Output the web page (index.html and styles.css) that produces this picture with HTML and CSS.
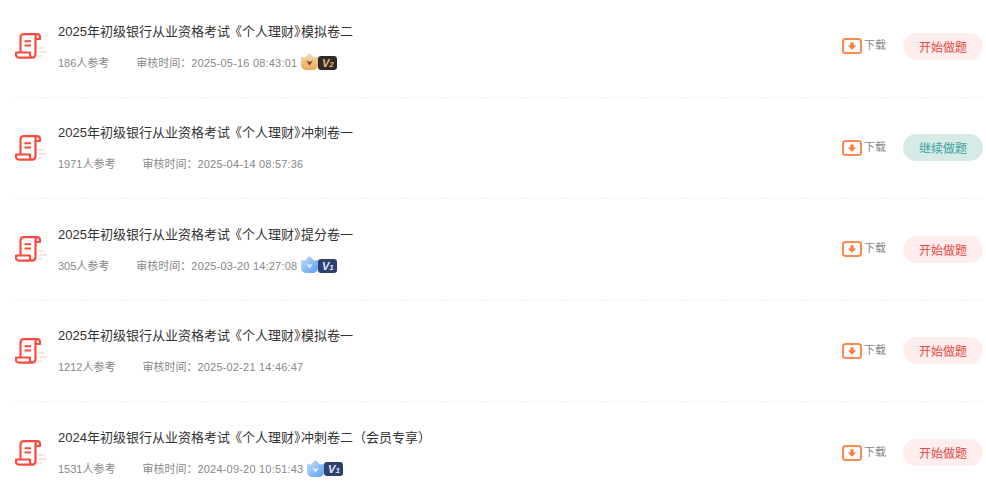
FILE: index.html
```html
<!DOCTYPE html>
<html lang="zh-CN">

<head>
    <meta charset="UTF-8">
    <title>试卷列表</title>
    <link rel="stylesheet" href="styles.css">
</head>

<body>
    <svg class="defs" width="0" height="0">
        <defs>
            <linearGradient id="goldFill" x1="0" y1="0" x2="0" y2="1">
                <stop offset="0" stop-color="#f8dcb4" />
                <stop offset="1" stop-color="#eda65a" />
            </linearGradient>
            <linearGradient id="blueFill" x1="0" y1="0" x2="1" y2="1">
                <stop offset="0" stop-color="#c4e0fb" />
                <stop offset="1" stop-color="#5a9df0" />
            </linearGradient>
            <symbol id="scroll" viewBox="0 0 33 26">
                <path d="M23 15H29M24 19H32M23 23H27" stroke="#fde3df" stroke-width="2" />
                <path d="M5.5 19V4.5C5.5 2.5 6.8 1.2 8.7 1.2H22C23.8 1.2 25 2.4 25 4V6H20.5V21C20.5 23.2 19 24.6 17 24.6H4C2.2 24.6 1 23.4 1 21.8V19.5H15V21.8C15 23.4 15.8 24.6 17 24.6" fill="none" stroke="#fb4b3e" stroke-width="2.2" stroke-linejoin="round" />
                <path d="M20.5 6V4.2C20.5 2.6 21 1.2 22 1.2" fill="none" stroke="#fb4b3e" stroke-width="2.2" />
                <path d="M9.5 8.2H16M9.5 12.4H16" stroke="#fb4b3e" stroke-width="2" />
            </symbol>
            <symbol id="down" viewBox="0 0 20 16">
                <rect x="1" y="1" width="18" height="14" rx="2.5" fill="#fff" stroke="#fb8a4c" stroke-width="2" />
                <path d="M8.3 4.5H11.7V7.5H14.2L10 11.8L5.8 7.5H8.3Z" fill="#fb7a3c" />
            </symbol>
            <symbol id="shieldGold" viewBox="0 0 17 17">
                <path d="M0 4L4 4.5L8.5 0L13 4.5L17 4V11.5C17 14.6 15 17 12 17H5C2 17 0 14.6 0 11.5Z" fill="url(#goldFill)" />
                <path d="M5 7.5L8.5 9L12 7.5L8.5 12.5Z" fill="#6d4a24" />
            </symbol>
            <symbol id="shieldBlue" viewBox="0 0 17 17">
                <path d="M0 4L4 4.5L8.5 0L13 4.5L17 4V11.5C17 14.6 15 17 12 17H5C2 17 0 14.6 0 11.5Z" fill="url(#blueFill)" />
                <path d="M5 7.5L8.5 9L12 7.5L8.5 12.5Z" fill="#eaf4ff" />
            </symbol>
        </defs>
    </svg>

    <div class="list">

        <div class="row">
            <svg class="paper-icon"><use href="#scroll" /></svg>
            <div class="info">
                <p class="title">2025年初级银行从业资格考试<span class="book-l">《</span>个人理财<span class="book-r">》</span>模拟卷二</p>
                <p class="meta">
                    <span class="count">186人参考</span>
                    <span>审核时间：<span class="time">2025-05-16 08:43:01</span></span>
                    <span class="vip">
                        <svg class="shield"><use href="#shieldGold" /></svg>
                        <span class="vip-tag gold">V<small>2</small></span>
                    </span>
                </p>
            </div>
            <a class="download" href="#"><svg class="down-icon"><use href="#down" /></svg><span>下载</span></a>
            <a class="btn start" href="#">开始做题</a>
        </div>

        <div class="row">
            <svg class="paper-icon"><use href="#scroll" /></svg>
            <div class="info">
                <p class="title">2025年初级银行从业资格考试<span class="book-l">《</span>个人理财<span class="book-r">》</span>冲刺卷一</p>
                <p class="meta">
                    <span class="count">1971人参考</span>
                    <span>审核时间：<span class="time">2025-04-14 08:57:36</span></span>
                </p>
            </div>
            <a class="download" href="#"><svg class="down-icon"><use href="#down" /></svg><span>下载</span></a>
            <a class="btn resume" href="#">继续做题</a>
        </div>

        <div class="row">
            <svg class="paper-icon"><use href="#scroll" /></svg>
            <div class="info">
                <p class="title">2025年初级银行从业资格考试<span class="book-l">《</span>个人理财<span class="book-r">》</span>提分卷一</p>
                <p class="meta">
                    <span class="count">305人参考</span>
                    <span>审核时间：<span class="time">2025-03-20 14:27:08</span></span>
                    <span class="vip">
                        <svg class="shield"><use href="#shieldBlue" /></svg>
                        <span class="vip-tag navy">V<small>1</small></span>
                    </span>
                </p>
            </div>
            <a class="download" href="#"><svg class="down-icon"><use href="#down" /></svg><span>下载</span></a>
            <a class="btn start" href="#">开始做题</a>
        </div>

        <div class="row">
            <svg class="paper-icon"><use href="#scroll" /></svg>
            <div class="info">
                <p class="title">2025年初级银行从业资格考试<span class="book-l">《</span>个人理财<span class="book-r">》</span>模拟卷一</p>
                <p class="meta">
                    <span class="count">1212人参考</span>
                    <span>审核时间：<span class="time">2025-02-21 14:46:47</span></span>
                </p>
            </div>
            <a class="download" href="#"><svg class="down-icon"><use href="#down" /></svg><span>下载</span></a>
            <a class="btn start" href="#">开始做题</a>
        </div>

        <div class="row last">
            <svg class="paper-icon"><use href="#scroll" /></svg>
            <div class="info">
                <p class="title">2024年初级银行从业资格考试<span class="book-l">《</span>个人理财<span class="book-r">》</span>冲刺卷二（会员专享）</p>
                <p class="meta">
                    <span class="count">1531人参考</span>
                    <span>审核时间：<span class="time">2024-09-20 10:51:43</span></span>
                    <span class="vip">
                        <svg class="shield"><use href="#shieldBlue" /></svg>
                        <span class="vip-tag navy">V<small>1</small></span>
                    </span>
                </p>
            </div>
            <a class="download" href="#"><svg class="down-icon"><use href="#down" /></svg><span>下载</span></a>
            <a class="btn start" href="#">开始做题</a>
        </div>

    </div>
</body>

</html>
```

FILE: styles.css
```css
* {
    margin: 0;
    padding: 0;
    box-sizing: border-box;
}

body {
    font-family: "Liberation Sans", "Noto Sans CJK SC", sans-serif;
    background-color: #fff;
    height: 503px;
    overflow: hidden;
}

a {
    text-decoration: none;
}

.defs {
    position: absolute;
}

.list {
    margin: -4px 3px 0 15px;
}

.row {
    height: 101.5px;
    display: flex;
    align-items: center;
    border-bottom: 1px dashed #f0f0f0;
}

.row.last {
    border-bottom: none;
}

.paper-icon {
    width: 33px;
    height: 26px;
    flex-shrink: 0;
    margin-right: 10px;
}

.info {
    flex: 1;
    min-width: 0;
}

.title {
    font-size: 13px;
    line-height: 18px;
    color: #333;
}

.book-l {
    margin-left: -1px;
}

.book-r {
    letter-spacing: -6px;
}

.meta {
    display: flex;
    align-items: center;
    margin-top: 13px;
    height: 16px;
    font-size: 11px;
    color: #888;
}

.count {
    margin-right: 27px;
}

.time {
    letter-spacing: 0.2px;
}

.vip {
    display: flex;
    align-items: center;
    margin-left: 4px;
}

.shield {
    width: 17px;
    height: 17px;
}

.vip-tag {
    width: 19px;
    height: 14px;
    margin-top: 2px;
    border-radius: 3px;
    font-size: 11px;
    font-weight: bold;
    font-style: italic;
    line-height: 14px;
    text-align: center;
}

.vip-tag small {
    font-size: 8px;
}

.vip-tag.gold {
    background-color: #2e2a26;
    color: #eeb872;
}

.vip-tag.navy {
    background-color: #2f3f6e;
    color: #dfe8fa;
}

.download {
    display: flex;
    align-items: flex-start;
    margin-right: 17px;
    font-size: 11px;
    line-height: 14px;
    color: #888;
}

.down-icon {
    width: 20px;
    height: 16px;
    margin-right: 2px;
}

.btn {
    width: 80px;
    height: 27px;
    border-radius: 14px;
    font-size: 12px;
    line-height: 30px;
    text-align: center;
}

.btn.start {
    background-color: #ffeeed;
    color: #e5483f;
}

.btn.resume {
    background-color: #d6ebe8;
    color: #3aa39e;
}
```
